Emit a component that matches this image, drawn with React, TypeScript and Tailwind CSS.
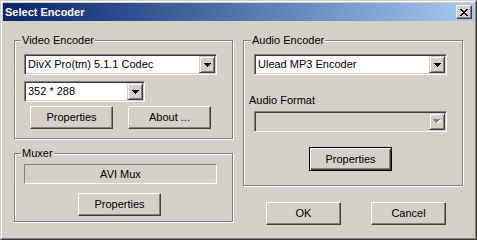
import React from 'react'

const font = "font-['Liberation_Sans',Arial,sans-serif]"

function Arrow({ disabled }: { disabled?: boolean }) {
  if (disabled) {
    return (
      <svg width="8" height="5" viewBox="0 0 8 5" shapeRendering="crispEdges">
        <path d="M1 1h7v1H1z M2 2h5v1H2z M3 3h3v1H3z M4 4h1v1H4z" fill="#fff" />
        <path d="M0 0h7v1H0z M1 1h5v1H1z M2 2h3v1H2z M3 3h1v1H3z" fill="#808080" />
      </svg>
    )
  }
  return (
    <svg width="7" height="4" viewBox="0 0 7 4" shapeRendering="crispEdges">
      <path d="M0 0h7v1H0z M1 1h5v1H1z M2 2h3v1H2z M3 3h1v1H3z" fill="#000" />
    </svg>
  )
}

function CloseGlyph() {
  return (
    <svg width="8" height="7" viewBox="0 0 8 7" shapeRendering="crispEdges">
      <path
        d="M0 0h2v1H0z M6 0h2v1H6z M1 1h2v1H1z M5 1h2v1H5z M2 2h4v1H2z M3 3h2v1H3z M2 4h4v1H2z M1 5h2v1H1z M5 5h2v1H5z M0 6h2v1H0z M6 6h2v1H6z"
        fill="#000"
      />
    </svg>
  )
}

function Combo({ className, text, disabled }: { className: string; text?: string; disabled?: boolean }) {
  return (
    <div
      className={`flex h-[21px] border border-t-[#808080] border-l-[#808080] border-b-white border-r-white p-px shadow-[inset_1px_1px_0_#404040,inset_-1px_-1px_0_#d4d0c8] ${disabled ? 'bg-[#d4d0c8]' : 'bg-white'} ${className}`}
    >
      <div className="flex flex-1 items-center pl-[2px] text-[11px] leading-[13px] text-black whitespace-nowrap">{text}</div>
      <div className="flex w-[16px] items-center justify-center border border-t-[#d4d0c8] border-l-[#d4d0c8] border-b-[#404040] border-r-[#404040] bg-[#d4d0c8] shadow-[inset_1px_1px_0_#fff,inset_-1px_-1px_0_#808080]">
        <Arrow disabled={disabled} />
      </div>
    </div>
  )
}

function Button({ className, children, isDefault }: { className: string; children: React.ReactNode; isDefault?: boolean }) {
  if (isDefault) {
    return (
      <div
        className={`flex items-center justify-center border border-black bg-[#d4d0c8] text-[11px] leading-[13px] text-black shadow-[inset_1px_1px_0_#fff,inset_-1px_-1px_0_#404040,inset_-2px_-2px_0_#808080] ${className}`}
      >
        {children}
      </div>
    )
  }
  return (
    <div
      className={`flex items-center justify-center border border-t-white border-l-white border-b-[#404040] border-r-[#404040] bg-[#d4d0c8] text-[11px] leading-[13px] text-black shadow-[inset_-1px_-1px_0_#808080] ${className}`}
    >
      {children}
    </div>
  )
}

function GroupLabel({ text, className }: { text: string; className: string }) {
  return (
    <span className={`absolute top-[-7px] bg-[#d4d0c8] px-px text-[11px] leading-[13px] text-black ${className}`}>{text}</span>
  )
}

export default function App() {
  return (
    <div className={`${font} h-[240px] w-[477px] border border-t-[#d4d0c8] border-l-[#d4d0c8] border-b-[#404040] border-r-[#404040] bg-[#d4d0c8]`}>
      <div className="flex h-full flex-col border border-t-white border-l-white border-b-[#808080] border-r-[#808080] p-px">
        {/* Title bar */}
        <div className="flex h-[18px] items-center justify-between bg-linear-to-r from-[#0a246a] to-[#a6caf0] pl-[2px] pr-[2px]">
          <span className="text-[11px] font-bold leading-[13px] text-white">Select Encoder</span>
          <div className="flex h-[14px] w-[16px] items-center justify-center border border-t-white border-l-white border-b-[#404040] border-r-[#404040] bg-[#d4d0c8] shadow-[inset_-1px_-1px_0_#808080]">
            <CloseGlyph />
          </div>
        </div>

        {/* Body */}
        <div className="flex pl-[11px] pt-[19px]">
          {/* Left column */}
          <div className="flex flex-col">
            <div className="relative flex h-[99px] w-[219px] flex-col border border-[#808080] pl-[9px] pt-[13px] shadow-[inset_1px_1px_0_#fff,1px_1px_0_#fff]">
              <GroupLabel text="Video Encoder" className="left-[6px]" />
              <Combo className="w-[193px]" text="DivX Pro(tm) 5.1.1 Codec" />
              <Combo className="mt-[6px] w-[121px]" text="352 * 288" />
              <div className="mt-[4px] flex gap-[15px] pl-[6px]">
                <Button className="h-[23px] w-[83px]">Properties</Button>
                <Button className="h-[23px] w-[83px]">About ...</Button>
              </div>
            </div>

            <div className="relative mt-[14px] flex h-[69px] w-[219px] flex-col border border-[#808080] pl-[9px] pt-[10px] shadow-[inset_1px_1px_0_#fff,1px_1px_0_#fff]">
              <GroupLabel text="Muxer" className="left-[6px]" />
              <div className="flex h-[20px] w-[193px] items-center justify-center border border-t-[#808080] border-l-[#808080] border-b-white border-r-white text-[11px] leading-[13px] text-black">
                AVI Mux
              </div>
              <Button className="ml-[54px] mt-[9px] h-[23px] w-[83px]">Properties</Button>
            </div>
          </div>

          {/* Right column */}
          <div className="ml-[10px] flex flex-col">
            <div className="relative flex h-[146px] w-[220px] flex-col border border-[#808080] pt-[13px] shadow-[inset_1px_1px_0_#fff,1px_1px_0_#fff]">
              <GroupLabel text="Audio Encoder" className="left-[7px]" />
              <Combo className="ml-[10px] w-[193px]" text="Ulead MP3 Encoder" />
              <span className="ml-[5px] mt-[19px] text-[11px] leading-[13px] text-black">Audio Format</span>
              <Combo className="ml-[10px] mt-[4px] w-[193px]" disabled />
              <Button isDefault className="ml-[65px] mt-[15px] h-[24px] w-[83px]">Properties</Button>
            </div>
            <div className="mt-[16px] flex gap-[30px] pl-[23px]">
              <Button className="h-[23px] w-[75px]">OK</Button>
              <Button className="h-[23px] w-[75px]">Cancel</Button>
            </div>
          </div>
        </div>
      </div>
    </div>
  )
}
